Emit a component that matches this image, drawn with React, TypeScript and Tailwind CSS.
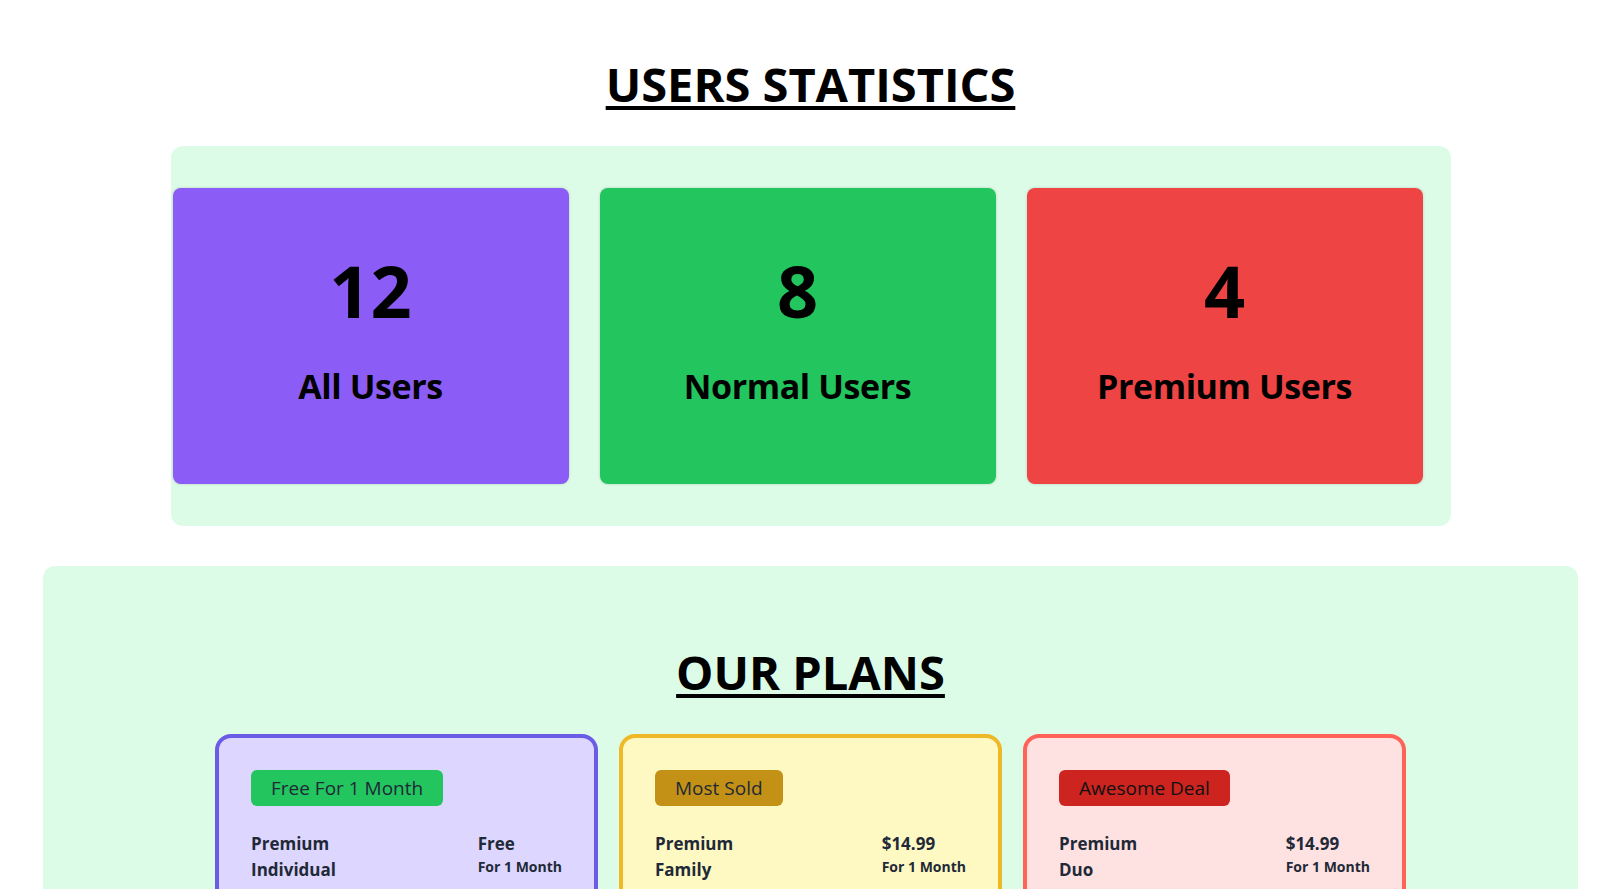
const stats = [
  { count: 12, label: "All Users", bg: "bg-[#8b5cf6]" },
  { count: 8, label: "Normal Users", bg: "bg-[#22c55e]" },
  { count: 4, label: "Premium Users", bg: "bg-[#ef4444]" },
]

const plans = [
  {
    badge: "Free For 1 Month",
    badgeBg: "bg-[#22c55e] text-[#1f2937]",
    card: "bg-[#ddd6fe] border-[#6b5ce7]",
    name: ["Premium", "Individual"],
    price: "Free",
  },
  {
    badge: "Most Sold",
    badgeBg: "bg-[#c39115] text-[#1f2937]",
    card: "bg-[#fef9c3] border-[#efb826]",
    name: ["Premium", "Family"],
    price: "$14.99",
  },
  {
    badge: "Awesome Deal",
    badgeBg: "bg-[#cd2420] text-[#111111]",
    card: "bg-[#fee2e2] border-[#ff6257]",
    name: ["Premium", "Duo"],
    price: "$14.99",
  },
]

const StatCard = ({ count, label, bg }: { count: number; label: string; bg: string }) => {
  return (
    <div className={`${bg} w-[396px] h-[296px] rounded-lg shadow-[0_0_3px_rgba(0,0,0,0.18)] flex flex-col items-center pt-[66px] text-black`}>
      <span className="text-7xl leading-none font-bold">{count}</span>
      <span className="text-[34px] leading-10 font-bold tracking-[-0.4px] mt-[40px]">{label}</span>
    </div>
  )
}

const PlanCard = ({ plan }: { plan: (typeof plans)[number] }) => {
  return (
    <div className={`${plan.card} w-[383px] border-4 rounded-2xl p-8 text-[#1f2937]`}>
      <span className={`${plan.badgeBg} inline-block rounded-md px-5 py-1 text-[19px] leading-7`}>
        {plan.badge}
      </span>
      <div className="flex justify-between mt-[25px]">
        <div className="text-[17px] leading-[26px] font-bold">
          <p>{plan.name[0]}</p>
          <p>{plan.name[1]}</p>
        </div>
        <div>
          <p className="text-[17px] leading-[26px] font-bold">{plan.price}</p>
          <p className="text-sm leading-5 font-bold">For 1 Month</p>
        </div>
      </div>
      <ul className="mt-6 space-y-2 text-base">
        <li>Ad-free music listening</li>
        <li>Download to listen offline</li>
        <li>Play songs in any order</li>
      </ul>
      <button className="mt-6 w-full rounded-full bg-[#1f2937] py-2 text-white font-semibold">
        Get Started
      </button>
    </div>
  )
}

export default function App() {
  return (
    <div className="min-h-screen bg-white pl-2 pt-[60px] pb-16 font-['Open_Sans',sans-serif]">
      <h1 className="text-center text-[47px] leading-[48px] font-bold text-black underline decoration-[4px] underline-offset-[4px]">
        USERS STATISTICS
      </h1>
      <section className="mx-auto mt-[38px] w-[1280px] rounded-xl bg-[#dcfce7] py-[42px] pl-[2px]">
        <div className="flex gap-[31px]">
          {stats.map((s) => (
            <StatCard key={s.label} {...s} />
          ))}
        </div>
      </section>
      <section className="mx-[35px] mt-[40px] rounded-xl bg-[#dcfce7] pt-[82px] pb-16">
        <h2 className="text-center text-[47px] leading-[48px] font-bold text-black underline decoration-[4px] underline-offset-[4px]">
          OUR PLANS
        </h2>
        <div className="flex justify-center gap-[21px] mt-[38px]">
          {plans.map((p) => (
            <PlanCard key={p.badge} plan={p} />
          ))}
        </div>
      </section>
    </div>
  )
}
